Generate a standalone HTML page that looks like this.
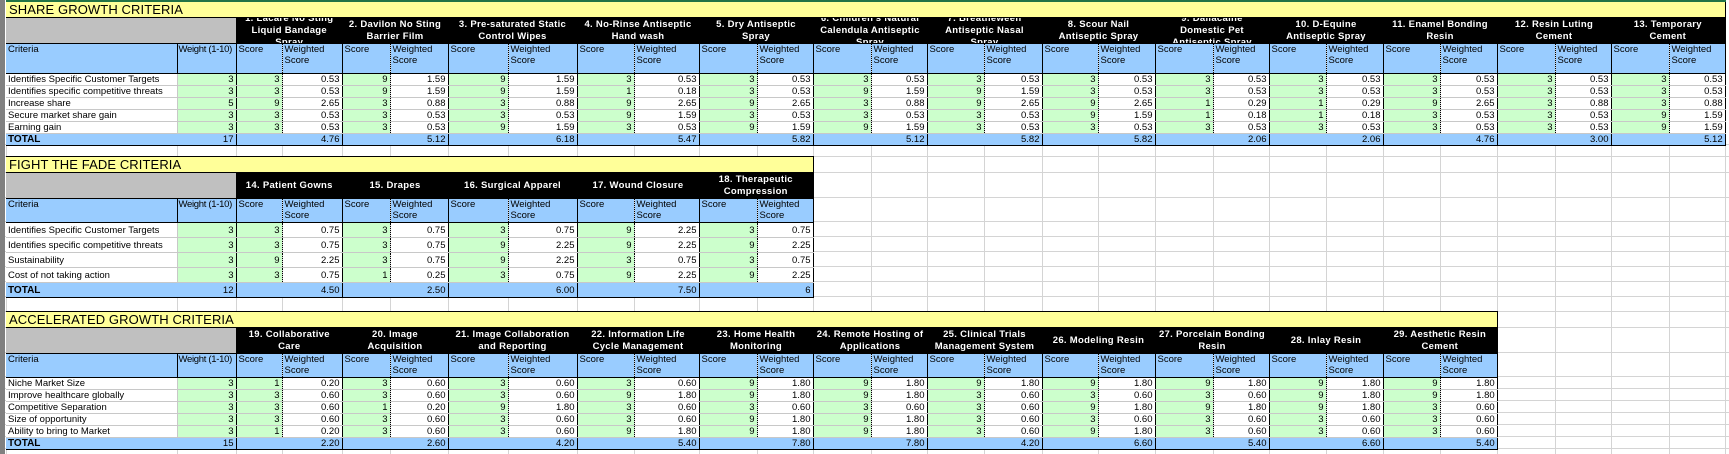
<!DOCTYPE html>
<html><head><meta charset="utf-8">
<style>
html,body{margin:0;padding:0;background:#fff;width:1729px;height:454px;overflow:hidden;position:relative}
svg.bg{position:absolute;left:0;top:0}
table{position:absolute;left:6px;border-collapse:collapse;table-layout:fixed;font-family:"Liberation Sans",Arial,sans-serif;font-size:9.5px;color:#000;border-right:1px solid #000}
td{padding:0 2px;overflow:hidden;white-space:nowrap;line-height:11px;box-sizing:border-box}
td.ti{background:#ffff99;font-size:13px;line-height:15px;border-bottom:1px solid #000;padding-left:3px;letter-spacing:0.1px}
tr.hd td{background:#000;color:#fff;font-weight:bold;font-size:9.5px;text-align:center;padding:0}
tr.hd td.g{background:#c0c0c0;border-right:1px solid #000}
tr.hd td div{display:flex;align-items:center;justify-content:center;overflow:hidden;white-space:normal;line-height:12px;padding:0 3px;letter-spacing:0.3px}
tr.bl td{background:#99ccff;vertical-align:top;border-bottom:1px solid #000;border-top:1px solid #000;white-space:normal;padding-top:0;line-height:11px}
tr.bl td.k{white-space:nowrap;letter-spacing:-0.3px;padding-left:1px}
tr.bl td.s,tr.dr td.s{border-left:1px solid #000;border-right:1px dotted #000}
tr.bl td.k{border-left:1px solid #000}
tr.dr td{border-bottom:1px solid #c8c8c8;text-align:right}
tr.dr td.c{background:#fff;text-align:left;border-right:1px solid #c8c8c8}
tr.dr td.k{background:#ccffcc}
tr.dr td.s{background:#ccffcc}
tr.dr td.w{background:#fff}
tr.tt td{background:#99ccff;border-top:1px solid #000;border-bottom:1px solid #000;text-align:right;border-left:1px solid #000}
tr.tt td.c{text-align:left;font-weight:bold;font-size:10px;border-left:0}
tr.tt td.k{border-left:0}
.strip{position:absolute;left:0;top:0;width:5px;height:454px;background:#808080}
</style></head><body>
<svg class="bg" width="1729" height="454">
<g stroke="#d4d4d4" stroke-width="1">
<line x1="6.5" y1="0" x2="6.5" y2="454"/><line x1="177.5" y1="0" x2="177.5" y2="454"/><line x1="236.5" y1="0" x2="236.5" y2="454"/><line x1="282.5" y1="0" x2="282.5" y2="454"/><line x1="342.5" y1="0" x2="342.5" y2="454"/><line x1="390.5" y1="0" x2="390.5" y2="454"/><line x1="448.5" y1="0" x2="448.5" y2="454"/><line x1="508.5" y1="0" x2="508.5" y2="454"/><line x1="577.5" y1="0" x2="577.5" y2="454"/><line x1="634.5" y1="0" x2="634.5" y2="454"/><line x1="699.5" y1="0" x2="699.5" y2="454"/><line x1="757.5" y1="0" x2="757.5" y2="454"/><line x1="813.5" y1="0" x2="813.5" y2="454"/><line x1="871.5" y1="0" x2="871.5" y2="454"/><line x1="927.5" y1="0" x2="927.5" y2="454"/><line x1="984.5" y1="0" x2="984.5" y2="454"/><line x1="1042.5" y1="0" x2="1042.5" y2="454"/><line x1="1098.5" y1="0" x2="1098.5" y2="454"/><line x1="1155.5" y1="0" x2="1155.5" y2="454"/><line x1="1213.5" y1="0" x2="1213.5" y2="454"/><line x1="1269.5" y1="0" x2="1269.5" y2="454"/><line x1="1326.5" y1="0" x2="1326.5" y2="454"/><line x1="1383.5" y1="0" x2="1383.5" y2="454"/><line x1="1440.5" y1="0" x2="1440.5" y2="454"/><line x1="1497.5" y1="0" x2="1497.5" y2="454"/><line x1="1555.5" y1="0" x2="1555.5" y2="454"/><line x1="1611.5" y1="0" x2="1611.5" y2="454"/><line x1="1669.5" y1="0" x2="1669.5" y2="454"/><line x1="1725.5" y1="0" x2="1725.5" y2="454"/>
<line x1="0" y1="144.5" x2="1729" y2="144.5"/><line x1="0" y1="156.5" x2="1729" y2="156.5"/><line x1="0" y1="172.5" x2="1729" y2="172.5"/><line x1="0" y1="197.5" x2="1729" y2="197.5"/><line x1="0" y1="221.5" x2="1729" y2="221.5"/><line x1="0" y1="236.5" x2="1729" y2="236.5"/><line x1="0" y1="251.5" x2="1729" y2="251.5"/><line x1="0" y1="266.5" x2="1729" y2="266.5"/><line x1="0" y1="281.5" x2="1729" y2="281.5"/><line x1="0" y1="296.5" x2="1729" y2="296.5"/><line x1="0" y1="311.5" x2="1729" y2="311.5"/><line x1="0" y1="327.5" x2="1729" y2="327.5"/><line x1="0" y1="352.5" x2="1729" y2="352.5"/><line x1="0" y1="376.5" x2="1729" y2="376.5"/><line x1="0" y1="388.5" x2="1729" y2="388.5"/><line x1="0" y1="400.5" x2="1729" y2="400.5"/><line x1="0" y1="412.5" x2="1729" y2="412.5"/><line x1="0" y1="424.5" x2="1729" y2="424.5"/><line x1="0" y1="436.5" x2="1729" y2="436.5"/><line x1="0" y1="448.5" x2="1729" y2="448.5"/>
</g>
</svg>
<div class="strip"></div>

<!-- SECTION 1 -->
<table style="top:0;width:1719px;border-top:2px solid #217346">
<colgroup><col style="width:171px"><col style="width:59px">
<col style="width:46px"><col style="width:60px"><col style="width:48px"><col style="width:58px"><col style="width:60px"><col style="width:69px"><col style="width:57px"><col style="width:65px"><col style="width:58px"><col style="width:56px"><col style="width:58px"><col style="width:56px"><col style="width:57px"><col style="width:58px"><col style="width:56px"><col style="width:57px"><col style="width:58px"><col style="width:56px"><col style="width:57px"><col style="width:57px"><col style="width:57px"><col style="width:57px"><col style="width:58px"><col style="width:56px"><col style="width:58px"><col style="width:56px"></colgroup>
<tr style="height:15px"><td class="ti" colspan="28">SHARE GROWTH CRITERIA</td></tr>
<tr class="hd" style="height:25px"><td class="g" colspan="2"></td>
<td colspan="2"><div style="height:25px">1. Lacare No Sting Liquid Bandage Spray</div></td>
<td colspan="2"><div style="height:25px">2. Davilon No Sting Barrier Film</div></td>
<td colspan="2"><div style="height:25px">3. Pre-saturated Static Control Wipes</div></td>
<td colspan="2"><div style="height:25px">4. No-Rinse Antiseptic Hand wash</div></td>
<td colspan="2"><div style="height:25px">5. Dry Antiseptic Spray</div></td>
<td colspan="2"><div style="height:25px">6. Children's Natural Calendula Antiseptic Spray</div></td>
<td colspan="2"><div style="height:25px">7. Breatheween Antiseptic Nasal Spray</div></td>
<td colspan="2"><div style="height:25px">8. Scour Nail Antiseptic Spray</div></td>
<td colspan="2"><div style="height:25px">9. Dallacaine Domestic Pet Antiseptic Spray</div></td>
<td colspan="2"><div style="height:25px">10. D-Equine Antiseptic Spray</div></td>
<td colspan="2"><div style="height:25px">11. Enamel Bonding Resin</div></td>
<td colspan="2"><div style="height:25px">12. Resin Luting Cement</div></td>
<td colspan="2"><div style="height:25px">13. Temporary Cement</div></td></tr>
<tr class="bl" style="height:30px"><td>Criteria</td><td class="k">Weight (1-10)</td>
<td class="s">Score</td><td>Weighted Score</td><td class="s">Score</td><td>Weighted Score</td><td class="s">Score</td><td>Weighted Score</td><td class="s">Score</td><td>Weighted Score</td><td class="s">Score</td><td>Weighted Score</td><td class="s">Score</td><td>Weighted Score</td><td class="s">Score</td><td>Weighted Score</td><td class="s">Score</td><td>Weighted Score</td><td class="s">Score</td><td>Weighted Score</td><td class="s">Score</td><td>Weighted Score</td><td class="s">Score</td><td>Weighted Score</td><td class="s">Score</td><td>Weighted Score</td><td class="s">Score</td><td>Weighted Score</td></tr>
<tr class="dr" style="height:12px"><td class="c">Identifies Specific Customer Targets</td><td class="k">3</td>
<td class="s">3</td><td class="w">0.53</td><td class="s">9</td><td class="w">1.59</td><td class="s">9</td><td class="w">1.59</td><td class="s">3</td><td class="w">0.53</td><td class="s">3</td><td class="w">0.53</td><td class="s">3</td><td class="w">0.53</td><td class="s">3</td><td class="w">0.53</td><td class="s">3</td><td class="w">0.53</td><td class="s">3</td><td class="w">0.53</td><td class="s">3</td><td class="w">0.53</td><td class="s">3</td><td class="w">0.53</td><td class="s">3</td><td class="w">0.53</td><td class="s">3</td><td class="w">0.53</td></tr>
<tr class="dr" style="height:12px"><td class="c">Identifies specific competitive threats</td><td class="k">3</td>
<td class="s">3</td><td class="w">0.53</td><td class="s">9</td><td class="w">1.59</td><td class="s">9</td><td class="w">1.59</td><td class="s">1</td><td class="w">0.18</td><td class="s">3</td><td class="w">0.53</td><td class="s">9</td><td class="w">1.59</td><td class="s">9</td><td class="w">1.59</td><td class="s">3</td><td class="w">0.53</td><td class="s">3</td><td class="w">0.53</td><td class="s">3</td><td class="w">0.53</td><td class="s">3</td><td class="w">0.53</td><td class="s">3</td><td class="w">0.53</td><td class="s">3</td><td class="w">0.53</td></tr>
<tr class="dr" style="height:12px"><td class="c">Increase share</td><td class="k">5</td>
<td class="s">9</td><td class="w">2.65</td><td class="s">3</td><td class="w">0.88</td><td class="s">3</td><td class="w">0.88</td><td class="s">9</td><td class="w">2.65</td><td class="s">9</td><td class="w">2.65</td><td class="s">3</td><td class="w">0.88</td><td class="s">9</td><td class="w">2.65</td><td class="s">9</td><td class="w">2.65</td><td class="s">1</td><td class="w">0.29</td><td class="s">1</td><td class="w">0.29</td><td class="s">9</td><td class="w">2.65</td><td class="s">3</td><td class="w">0.88</td><td class="s">3</td><td class="w">0.88</td></tr>
<tr class="dr" style="height:12px"><td class="c">Secure market share gain</td><td class="k">3</td>
<td class="s">3</td><td class="w">0.53</td><td class="s">3</td><td class="w">0.53</td><td class="s">3</td><td class="w">0.53</td><td class="s">9</td><td class="w">1.59</td><td class="s">3</td><td class="w">0.53</td><td class="s">3</td><td class="w">0.53</td><td class="s">3</td><td class="w">0.53</td><td class="s">9</td><td class="w">1.59</td><td class="s">1</td><td class="w">0.18</td><td class="s">1</td><td class="w">0.18</td><td class="s">3</td><td class="w">0.53</td><td class="s">3</td><td class="w">0.53</td><td class="s">9</td><td class="w">1.59</td></tr>
<tr class="dr" style="height:12px"><td class="c">Earning gain</td><td class="k">3</td>
<td class="s">3</td><td class="w">0.53</td><td class="s">3</td><td class="w">0.53</td><td class="s">9</td><td class="w">1.59</td><td class="s">3</td><td class="w">0.53</td><td class="s">9</td><td class="w">1.59</td><td class="s">9</td><td class="w">1.59</td><td class="s">3</td><td class="w">0.53</td><td class="s">3</td><td class="w">0.53</td><td class="s">3</td><td class="w">0.53</td><td class="s">3</td><td class="w">0.53</td><td class="s">3</td><td class="w">0.53</td><td class="s">3</td><td class="w">0.53</td><td class="s">9</td><td class="w">1.59</td></tr>
<tr class="tt" style="height:12px"><td class="c">TOTAL</td><td class="k">17</td>
<td colspan="2">4.76</td><td colspan="2">5.12</td><td colspan="2">6.18</td><td colspan="2">5.47</td><td colspan="2">5.82</td><td colspan="2">5.12</td><td colspan="2">5.82</td><td colspan="2">5.82</td><td colspan="2">2.06</td><td colspan="2">2.06</td><td colspan="2">4.76</td><td colspan="2">3.00</td><td colspan="2">5.12</td></tr>
</table>

<!-- SECTION 2 -->
<table style="top:156px;width:807px;border-top:1px solid #000">
<colgroup><col style="width:171px"><col style="width:59px">
<col style="width:46px"><col style="width:60px"><col style="width:48px"><col style="width:58px"><col style="width:60px"><col style="width:69px"><col style="width:57px"><col style="width:65px"><col style="width:58px"><col style="width:56px"></colgroup>
<tr style="height:15px"><td class="ti" colspan="12">FIGHT THE FADE CRITERIA</td></tr>
<tr class="hd" style="height:25px"><td class="g" colspan="2"></td>
<td colspan="2"><div style="height:25px">14. Patient Gowns</div></td>
<td colspan="2"><div style="height:25px">15. Drapes</div></td>
<td colspan="2"><div style="height:25px">16. Surgical Apparel</div></td>
<td colspan="2"><div style="height:25px">17. Wound Closure</div></td>
<td colspan="2"><div style="height:25px">18. Therapeutic Compression</div></td></tr>
<tr class="bl" style="height:24px"><td>Criteria</td><td class="k">Weight (1-10)</td>
<td class="s">Score</td><td>Weighted Score</td><td class="s">Score</td><td>Weighted Score</td><td class="s">Score</td><td>Weighted Score</td><td class="s">Score</td><td>Weighted Score</td><td class="s">Score</td><td>Weighted Score</td></tr>
<tr class="dr" style="height:15px"><td class="c">Identifies Specific Customer Targets</td><td class="k">3</td>
<td class="s">3</td><td class="w">0.75</td><td class="s">3</td><td class="w">0.75</td><td class="s">3</td><td class="w">0.75</td><td class="s">9</td><td class="w">2.25</td><td class="s">3</td><td class="w">0.75</td></tr>
<tr class="dr" style="height:15px"><td class="c">Identifies specific competitive threats</td><td class="k">3</td>
<td class="s">3</td><td class="w">0.75</td><td class="s">3</td><td class="w">0.75</td><td class="s">9</td><td class="w">2.25</td><td class="s">9</td><td class="w">2.25</td><td class="s">9</td><td class="w">2.25</td></tr>
<tr class="dr" style="height:15px"><td class="c">Sustainability</td><td class="k">3</td>
<td class="s">9</td><td class="w">2.25</td><td class="s">3</td><td class="w">0.75</td><td class="s">9</td><td class="w">2.25</td><td class="s">3</td><td class="w">0.75</td><td class="s">3</td><td class="w">0.75</td></tr>
<tr class="dr" style="height:15px"><td class="c">Cost of not taking action</td><td class="k">3</td>
<td class="s">3</td><td class="w">0.75</td><td class="s">1</td><td class="w">0.25</td><td class="s">3</td><td class="w">0.75</td><td class="s">9</td><td class="w">2.25</td><td class="s">9</td><td class="w">2.25</td></tr>
<tr class="tt" style="height:15px"><td class="c">TOTAL</td><td class="k">12</td>
<td colspan="2">4.50</td><td colspan="2">2.50</td><td colspan="2">6.00</td><td colspan="2">7.50</td><td colspan="2">6</td></tr>
</table>

<!-- SECTION 3 -->
<table style="top:311px;width:1491px;border-top:1px solid #000">
<colgroup><col style="width:171px"><col style="width:59px">
<col style="width:46px"><col style="width:60px"><col style="width:48px"><col style="width:58px"><col style="width:60px"><col style="width:69px"><col style="width:57px"><col style="width:65px"><col style="width:58px"><col style="width:56px"><col style="width:58px"><col style="width:56px"><col style="width:57px"><col style="width:58px"><col style="width:56px"><col style="width:57px"><col style="width:58px"><col style="width:56px"><col style="width:57px"><col style="width:57px"><col style="width:57px"><col style="width:57px"></colgroup>
<tr style="height:15px"><td class="ti" colspan="24">ACCELERATED GROWTH CRITERIA</td></tr>
<tr class="hd" style="height:25px"><td class="g" colspan="2"></td>
<td colspan="2"><div style="height:25px">19. Collaborative Care</div></td>
<td colspan="2"><div style="height:25px">20. Image Acquisition</div></td>
<td colspan="2"><div style="height:25px">21. Image Collaboration and Reporting</div></td>
<td colspan="2"><div style="height:25px">22. Information Life Cycle Management</div></td>
<td colspan="2"><div style="height:25px">23. Home Health Monitoring</div></td>
<td colspan="2"><div style="height:25px">24. Remote Hosting of Applications</div></td>
<td colspan="2"><div style="height:25px">25. Clinical Trials Management System</div></td>
<td colspan="2"><div style="height:25px">26. Modeling Resin</div></td>
<td colspan="2"><div style="height:25px">27. Porcelain Bonding Resin</div></td>
<td colspan="2"><div style="height:25px">28. Inlay Resin</div></td>
<td colspan="2"><div style="height:25px">29. Aesthetic Resin Cement</div></td></tr>
<tr class="bl" style="height:24px"><td>Criteria</td><td class="k">Weight (1-10)</td>
<td class="s">Score</td><td>Weighted Score</td><td class="s">Score</td><td>Weighted Score</td><td class="s">Score</td><td>Weighted Score</td><td class="s">Score</td><td>Weighted Score</td><td class="s">Score</td><td>Weighted Score</td><td class="s">Score</td><td>Weighted Score</td><td class="s">Score</td><td>Weighted Score</td><td class="s">Score</td><td>Weighted Score</td><td class="s">Score</td><td>Weighted Score</td><td class="s">Score</td><td>Weighted Score</td><td class="s">Score</td><td>Weighted Score</td></tr>
<tr class="dr" style="height:12px"><td class="c">Niche Market Size</td><td class="k">3</td>
<td class="s">1</td><td class="w">0.20</td><td class="s">3</td><td class="w">0.60</td><td class="s">3</td><td class="w">0.60</td><td class="s">3</td><td class="w">0.60</td><td class="s">9</td><td class="w">1.80</td><td class="s">9</td><td class="w">1.80</td><td class="s">9</td><td class="w">1.80</td><td class="s">9</td><td class="w">1.80</td><td class="s">9</td><td class="w">1.80</td><td class="s">9</td><td class="w">1.80</td><td class="s">9</td><td class="w">1.80</td></tr>
<tr class="dr" style="height:12px"><td class="c">Improve healthcare globally</td><td class="k">3</td>
<td class="s">3</td><td class="w">0.60</td><td class="s">3</td><td class="w">0.60</td><td class="s">3</td><td class="w">0.60</td><td class="s">9</td><td class="w">1.80</td><td class="s">9</td><td class="w">1.80</td><td class="s">9</td><td class="w">1.80</td><td class="s">3</td><td class="w">0.60</td><td class="s">3</td><td class="w">0.60</td><td class="s">3</td><td class="w">0.60</td><td class="s">9</td><td class="w">1.80</td><td class="s">9</td><td class="w">1.80</td></tr>
<tr class="dr" style="height:12px"><td class="c">Competitive Separation</td><td class="k">3</td>
<td class="s">3</td><td class="w">0.60</td><td class="s">1</td><td class="w">0.20</td><td class="s">9</td><td class="w">1.80</td><td class="s">3</td><td class="w">0.60</td><td class="s">3</td><td class="w">0.60</td><td class="s">3</td><td class="w">0.60</td><td class="s">3</td><td class="w">0.60</td><td class="s">9</td><td class="w">1.80</td><td class="s">9</td><td class="w">1.80</td><td class="s">9</td><td class="w">1.80</td><td class="s">3</td><td class="w">0.60</td></tr>
<tr class="dr" style="height:12px"><td class="c">Size of opportunity</td><td class="k">3</td>
<td class="s">3</td><td class="w">0.60</td><td class="s">3</td><td class="w">0.60</td><td class="s">3</td><td class="w">0.60</td><td class="s">3</td><td class="w">0.60</td><td class="s">9</td><td class="w">1.80</td><td class="s">9</td><td class="w">1.80</td><td class="s">3</td><td class="w">0.60</td><td class="s">3</td><td class="w">0.60</td><td class="s">3</td><td class="w">0.60</td><td class="s">3</td><td class="w">0.60</td><td class="s">3</td><td class="w">0.60</td></tr>
<tr class="dr" style="height:12px"><td class="c">Ability to bring to Market</td><td class="k">3</td>
<td class="s">1</td><td class="w">0.20</td><td class="s">3</td><td class="w">0.60</td><td class="s">3</td><td class="w">0.60</td><td class="s">9</td><td class="w">1.80</td><td class="s">9</td><td class="w">1.80</td><td class="s">9</td><td class="w">1.80</td><td class="s">3</td><td class="w">0.60</td><td class="s">9</td><td class="w">1.80</td><td class="s">3</td><td class="w">0.60</td><td class="s">3</td><td class="w">0.60</td><td class="s">3</td><td class="w">0.60</td></tr>
<tr class="tt" style="height:12px"><td class="c">TOTAL</td><td class="k">15</td>
<td colspan="2">2.20</td><td colspan="2">2.60</td><td colspan="2">4.20</td><td colspan="2">5.40</td><td colspan="2">7.80</td><td colspan="2">7.80</td><td colspan="2">4.20</td><td colspan="2">6.60</td><td colspan="2">5.40</td><td colspan="2">6.60</td><td colspan="2">5.40</td></tr>
</table>
</body></html>
